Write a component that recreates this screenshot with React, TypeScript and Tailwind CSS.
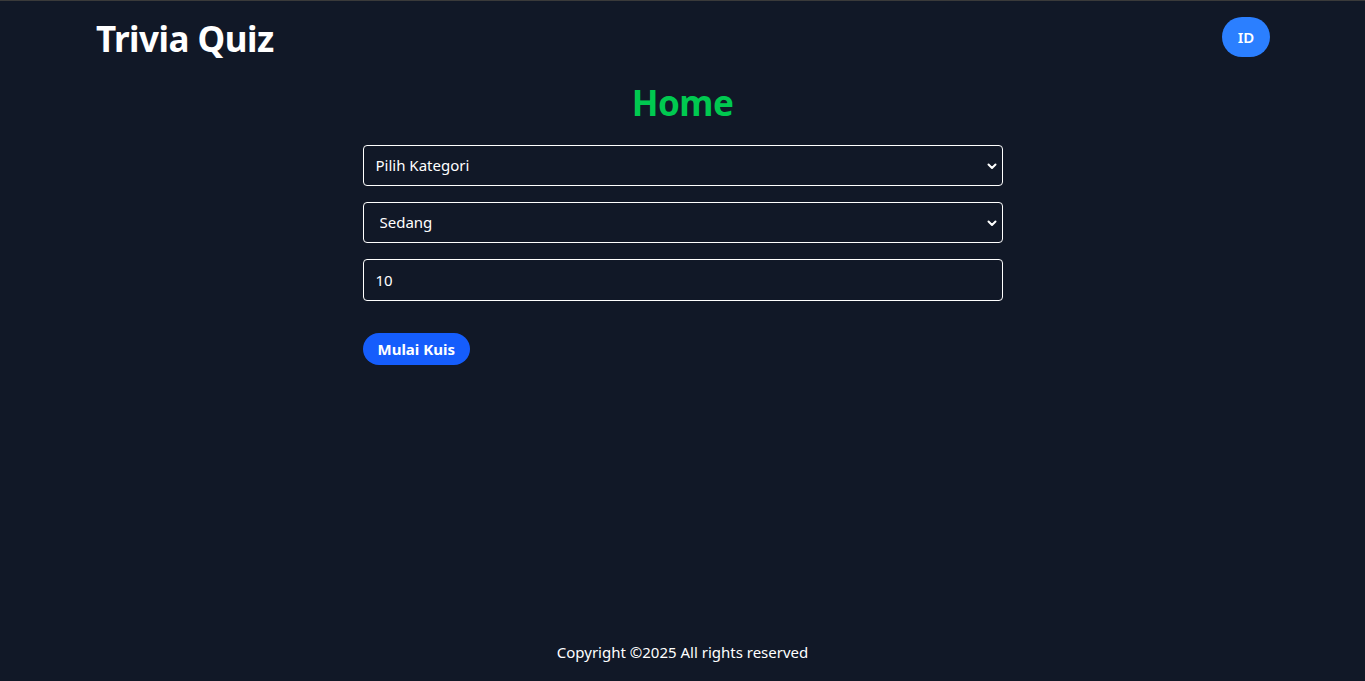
import React from "react";

function Chevron() {
  return (
    <svg
      className="pointer-events-none absolute right-[6px] top-1/2 -translate-y-1/2"
      width="10"
      height="8"
      viewBox="0 0 10 8"
      fill="none"
    >
      <path d="M1.5 2.5 L5 6 L8.5 2.5" stroke="white" strokeWidth="2" strokeLinecap="round" strokeLinejoin="round" />
    </svg>
  );
}

export default function App() {
  const font = { fontFamily: '"Noto Sans", "Open Sans", sans-serif' };
  return (
    <div
      className="min-h-screen flex flex-col bg-[#111827] text-white border-t border-[#3a3a3a]"
      style={font}
    >
      <header className="h-[72px] flex items-center justify-between pl-24 pr-[95px]">
        <h1 className="text-[35px] leading-10 font-bold tracking-[-0.5px] pt-1">Trivia Quiz</h1>
        <button className="h-10 w-12 rounded-full bg-[#2b7fff] text-[15px] font-semibold text-white">
          ID
        </button>
      </header>
      <main className="flex-1 flex flex-col items-center">
        <h2 className="text-[35px] leading-10 font-bold text-[#00c950] mt-[10px] mb-[22px] tracking-[-0.5px]">Home</h2>
        <form className="w-[640px] flex flex-col gap-4" onSubmit={(e) => e.preventDefault()}>
          <div className="relative">
            <select className="appearance-none w-full h-[41px] rounded-[4px] border border-white bg-[#111827] px-3 text-[15px] text-white outline-none">
              <option>Pilih Kategori</option>
            </select>
            <Chevron />
          </div>
          <div className="relative">
            <select className="appearance-none w-full h-[41px] rounded-[4px] border border-white bg-[#111827] pl-4 pr-3 text-[15px] text-white outline-none">
              <option>Sedang</option>
            </select>
            <Chevron />
          </div>
          <input
            className="w-full h-[42px] rounded-[4px] border border-white bg-[#111827] px-3 text-[15px] text-white outline-none"
            defaultValue="10"
          />
          <div className="mt-4">
            <button className="h-8 px-[15px] rounded-full bg-[#155dfc] text-[15px] font-bold text-white">
              Mulai Kuis
            </button>
          </div>
        </form>
      </main>
      <footer className="pb-[17px] text-center text-[15px] leading-6">
        Copyright ©2025 All rights reserved
      </footer>
    </div>
  );
}
